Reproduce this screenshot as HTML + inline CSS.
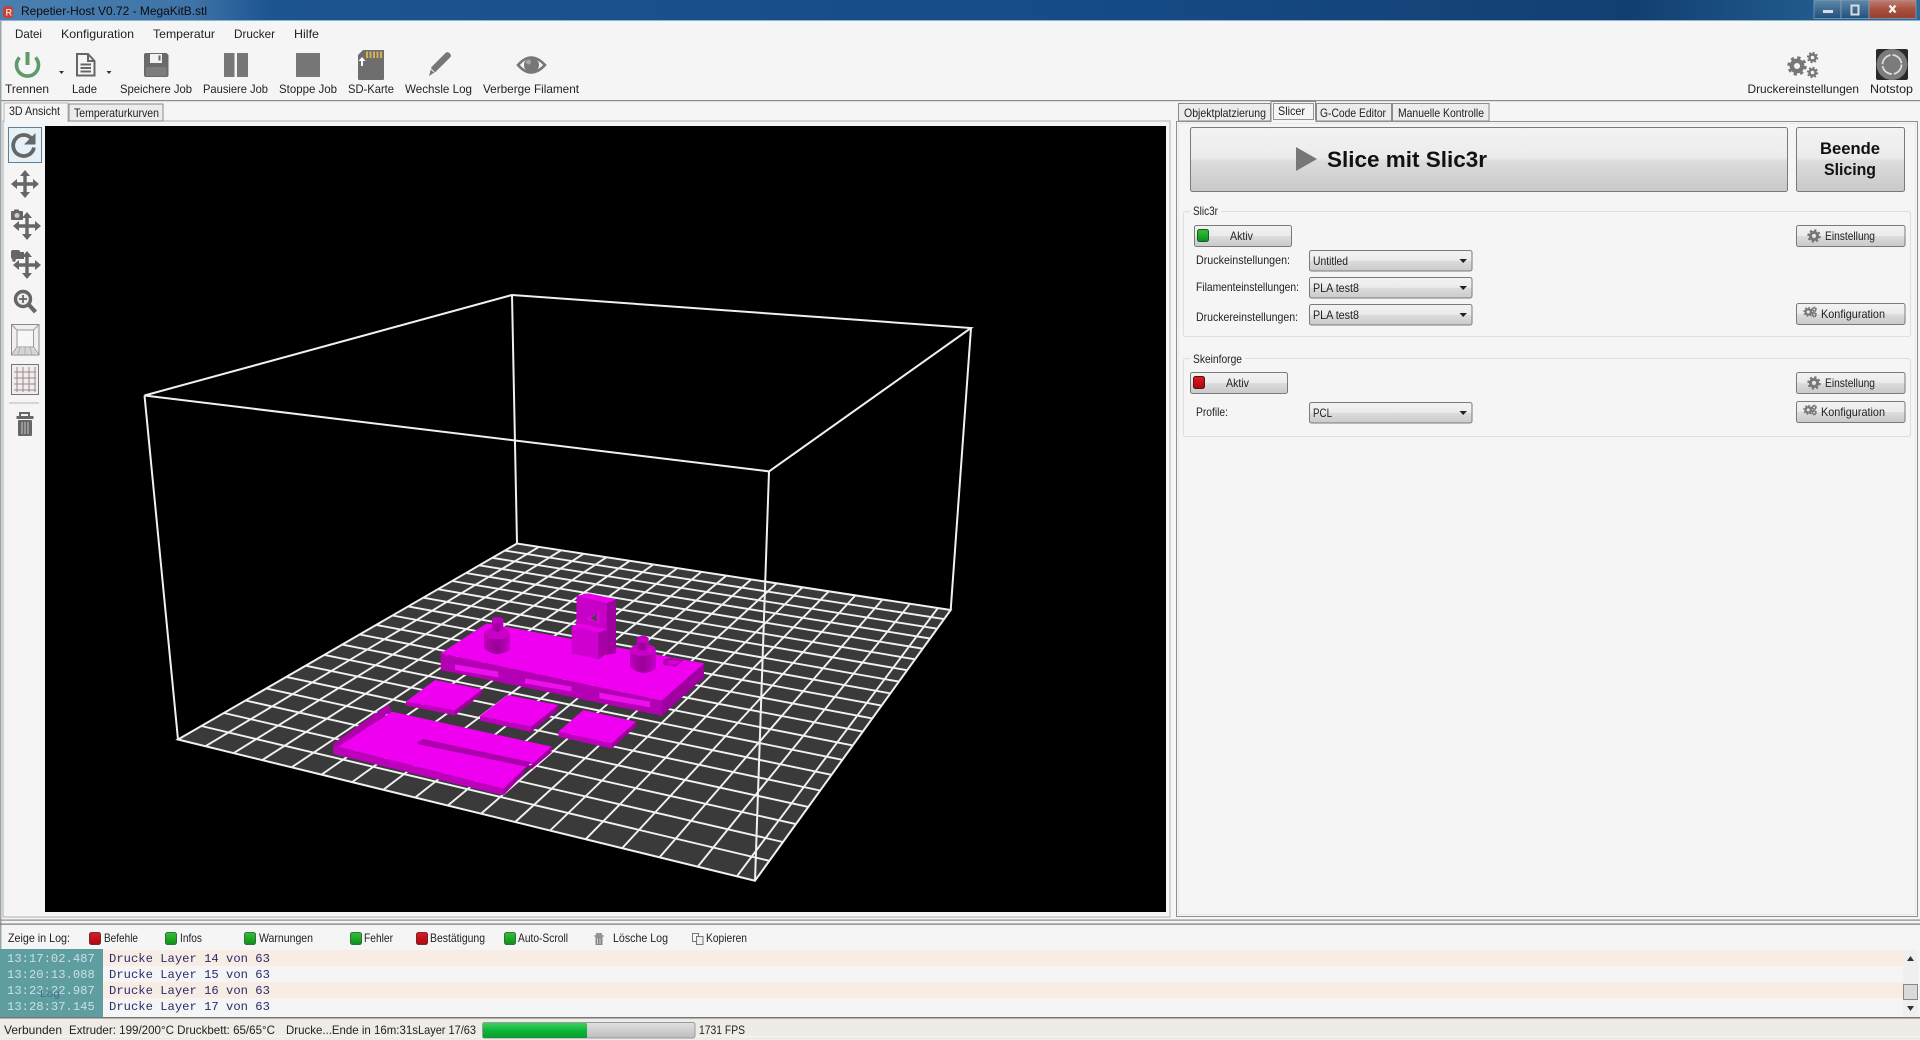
<!DOCTYPE html>
<html lang="de"><head><meta charset="utf-8"><title>Repetier-Host V0.72 - MegaKitB.stl</title>
<style>html,body{margin:0;padding:0;width:1920px;height:1040px;overflow:hidden;background:#f5f5f5}svg{display:block}text{font-family:"Liberation Sans",Arial,sans-serif;font-size:12px;fill:#222;white-space:pre}.m{font-family:"Liberation Mono",monospace;font-size:12.2px}</style></head><body>
<svg xmlns="http://www.w3.org/2000/svg" width="1920" height="1040" viewBox="0 0 1920 1040">
<defs>
<linearGradient id="title" x1="0" x2="1" y1="0" y2="0"><stop offset="0" stop-color="#4a7fb0"/><stop offset=".1" stop-color="#3f74a8"/><stop offset=".14" stop-color="#1d5590"/><stop offset=".6" stop-color="#164a84"/><stop offset=".85" stop-color="#123f72"/><stop offset="1" stop-color="#2a6a9c"/></linearGradient>
<linearGradient id="btn" x1="0" x2="0" y1="0" y2="1"><stop offset="0" stop-color="#f3f3f3"/><stop offset=".48" stop-color="#ebebeb"/><stop offset=".52" stop-color="#dcdcdc"/><stop offset="1" stop-color="#c9c9c9"/></linearGradient>
<linearGradient id="gled" x1="0" x2="0" y1="0" y2="1"><stop offset="0" stop-color="#35c035"/><stop offset="1" stop-color="#0c8f1c"/></linearGradient>
<linearGradient id="rled" x1="0" x2="0" y1="0" y2="1"><stop offset="0" stop-color="#e01a22"/><stop offset="1" stop-color="#a80a12"/></linearGradient>
<linearGradient id="prog" x1="0" x2="0" y1="0" y2="1"><stop offset="0" stop-color="#3fd060"/><stop offset=".5" stop-color="#0cb53a"/><stop offset="1" stop-color="#0a9c30"/></linearGradient>
<linearGradient id="track" x1="0" x2="0" y1="0" y2="1"><stop offset="0" stop-color="#e0e0e0"/><stop offset="1" stop-color="#bdbdbd"/></linearGradient>
<linearGradient id="close" x1="0" x2="0" y1="0" y2="1"><stop offset="0" stop-color="#c08074"/><stop offset=".5" stop-color="#a8503f"/><stop offset="1" stop-color="#983f30"/></linearGradient>
<linearGradient id="wb" x1="0" x2="0" y1="0" y2="1"><stop offset="0" stop-color="#5f88a8"/><stop offset="1" stop-color="#1f507c"/></linearGradient>
<linearGradient id="cyl" x1="0" x2="1" y1="0" y2="0"><stop offset="0" stop-color="#bc00b8"/><stop offset=".5" stop-color="#980098"/><stop offset="1" stop-color="#c400c4"/></linearGradient>
<g id="mv"><path d="M-10 0H10M0-10V10" stroke="#666" stroke-width="3.4" fill="none"/><path d="M0-14L-5-8H5ZM0 14L-5 8H5ZM-14 0L-8-5V5ZM14 0L8-5V5Z" fill="#666"/></g>
<g id="gear"><circle r="3.6" fill="none" stroke="#777" stroke-width="3"/><circle r="5.6" fill="none" stroke="#777" stroke-width="2.2" stroke-dasharray="2.2 2.2"/></g>
<g id="gears"><use href="#gear" transform="translate(6,7) scale(1.05)"/><use href="#gear" transform="translate(14.5,3.5) scale(.62)"/><use href="#gear" transform="translate(14.5,11) scale(.62)"/></g>
</defs>
<rect width="1920" height="1040" fill="#f5f5f5"/>
<!-- title bar -->
<rect width="1920" height="20" fill="url(#title)"/><rect y="20" width="1920" height="1" fill="#8fb4d2"/>
<rect x="3" y="6" width="10" height="12" rx="3" fill="#c8403a"/><text x="5.5" y="15.5" style="font-size:9px;font-weight:bold;fill:#f4d8d0">R</text>
<text x="21" y="15" textLength="186" style="fill:#0c0c0c">Repetier-Host V0.72 - MegaKitB.stl</text>
<rect x="1814" y="0" width="27" height="18.500" fill="url(#wb)" stroke="#8fa6b8" stroke-width=".7"/><rect x="1841" y="0" width="28" height="18.500" fill="url(#wb)" stroke="#8fa6b8" stroke-width=".7"/><rect x="1869" y="0" width="47" height="18.500" fill="url(#close)" stroke="#8fa6b8" stroke-width=".7"/>
<rect x="1823" y="10" width="10" height="3" fill="#d8dee4"/><rect x="1851.500" y="5.500" width="7" height="9" fill="none" stroke="#d8dee4" stroke-width="2"/>
<path d="M1889.500 5.500L1895.500 12.500M1895.500 5.500L1889.500 12.500" stroke="#f0f0f0" stroke-width="2.400"/>
<!-- menu -->
<text x="15" y="38" textLength="27">Datei</text><text x="61" y="38" textLength="73">Konfiguration</text><text x="153" y="38" textLength="62">Temperatur</text><text x="234" y="38" textLength="41">Drucker</text><text x="294" y="38" textLength="25">Hilfe</text>
<!-- toolbar icons -->
<path d="M19.5 57.500A11 11 0 1 0 35.500 57.500" fill="none" stroke="#5f9a6b" stroke-width="3.600"/><path d="M27.500 52V65" stroke="#5f9a6b" stroke-width="4"/>
<path d="M59 71H64L61.500 74Z" fill="#333"/>
<path d="M77 54H88L94.500 61V75.500H77ZM88 54V61H94.500M80.500 64.500H91M80.500 68H91M80.500 71.500H91" fill="none" stroke="#666" stroke-width="2"/>
<path d="M106.500 71H111.500L109 74Z" fill="#333"/>
<path d="M146 53H166.500L168.500 55V75Q168.500 77 166.500 77H146Q144 77 144 75V55Q144 53 146 53Z" fill="#6a6a6a"/><rect x="150" y="54" width="12" height="9" fill="#f2f2f2"/><rect x="158.500" y="55.500" width="2" height="5" fill="#666"/><rect x="146" y="67" width="20.500" height="9" fill="#7d7d7d"/>
<rect x="224" y="53" width="10.500" height="24" fill="#777"/><rect x="237" y="53" width="11" height="24" fill="#777"/>
<rect x="296" y="53" width="24" height="24" fill="#777"/>
<path d="M363 50H384V79Q384 80 383 80H359Q358 80 358 79V55Z" fill="#6e6e6e"/><path d="M367 51.500V58M370.500 51.500V58M374 51.500V58M377.500 51.500V58M381 51.500V58" stroke="#d4b050" stroke-width="2"/><path d="M362 57L365.500 61H363V66H361V61H358.500Z" fill="#fff"/>
<path d="M429 76L431.500 67L446 52.500Q448 51.500 450 53.500Q451.500 55.500 450.500 57L436 71.500Z" fill="#777"/><path d="M431 69L434 72" stroke="#f5f5f5"/>
<path d="M518 65Q531 50 545 65Q531 80 518 65Z" fill="none" stroke="#777" stroke-width="2.600"/><circle cx="531.500" cy="65" r="7.500" fill="#777"/><circle cx="528.500" cy="62" r="2.500" fill="#a5a5a5"/>
<use href="#gear" transform="translate(1797,66) scale(1.45)"/><use href="#gear" transform="translate(1812.500,57.500) scale(.85)"/><use href="#gear" transform="translate(1812.500,72.500) scale(.85)"/>
<rect x="1876" y="49" width="32" height="31" rx="2" fill="#2a2a2a"/><circle cx="1892" cy="64.500" r="15.500" fill="#7b7b7b"/><circle cx="1892" cy="64.500" r="9.500" fill="none" stroke="#ddd" stroke-width="1.800" stroke-dasharray="13 2"/>
<!-- toolbar labels -->
<g><text x="5" y="93" textLength="44">Trennen</text><text x="72" y="93" textLength="25">Lade</text><text x="120" y="93" textLength="72">Speichere Job</text><text x="203" y="93" textLength="65">Pausiere Job</text><text x="279" y="93" textLength="58">Stoppe Job</text><text x="348" y="93" textLength="46">SD-Karte</text><text x="405" y="93" textLength="67">Wechsle Log</text><text x="483" y="93" textLength="96">Verberge Filament</text><text x="1747.500" y="93" textLength="111.500">Druckereinstellungen</text><text x="1870" y="93" textLength="43">Notstop</text></g>
<rect y="100" width="1920" height="1.200" fill="#8a8a8a"/>
<!-- left pane -->
<rect x="0" y="21" width="1.500" height="1019" fill="#9aa5ad"/>
<rect x="3" y="121" width="1167" height="796" fill="#f5f5f5" stroke="#b0b0b0"/>
<path d="M4 122V103H68V122" fill="#f5f5f5" stroke="#b5b5b5"/><rect x="4.500" y="119" width="63" height="4" fill="#f5f5f5"/>
<rect x="69" y="104" width="94" height="17" fill="#ececec" stroke="#8a8a8a"/>
<text x="9" y="115" textLength="51">3D Ansicht</text><text x="74" y="117" textLength="85">Temperaturkurven</text>
<rect x="8.500" y="127.500" width="33" height="35" fill="#e6f1f7" stroke="#5f7f98"/>
<path d="M31.500 138.500A10.500 10.500 0 1 0 34 147.500" fill="none" stroke="#666" stroke-width="3.800"/><path d="M35.500 133V144.500H24Z" fill="#666"/>
<use href="#mv" transform="translate(25,184)"/>
<rect x="11" y="211" width="12" height="9" rx="1" fill="#666"/><rect x="14" y="209.500" width="5" height="2" fill="#666"/><circle cx="17" cy="215.500" r="2.500" fill="#ccc"/><use href="#mv" transform="translate(27,226)"/>
<rect x="11" y="250" width="9" height="9" rx="2" fill="#666"/><rect x="19" y="252" width="5" height="7" fill="#666"/><circle cx="14" cy="260" r="1.800" fill="#666"/><use href="#mv" transform="translate(27,265)"/>
<circle cx="23" cy="299" r="7.500" fill="#eee" stroke="#666" stroke-width="3.400"/><path d="M19 299H27M23 295V303" stroke="#666" stroke-width="1.800"/><path d="M29 305L35.500 312" stroke="#666" stroke-width="4.200"/>
<rect x="11.500" y="324.500" width="27.500" height="30.500" fill="#efefef" stroke="#8a8a8a"/><rect x="17" y="330" width="16.500" height="17" fill="#f7f7f7" stroke="#9a9a9a"/><path d="M11.500 324.500L17 330M39 324.500L33.500 330M11.500 355L17 347M39 355L33.500 347" stroke="#9a9a9a"/><path d="M17 349H33M15 351H35M14 353H36M20 347L18 355M25 347V355M30 347L32 355" stroke="#a8a8a8" stroke-width=".8"/>
<rect x="11.500" y="364.500" width="27" height="30" fill="#eee" stroke="#777"/><path d="M14 372H36M14 378H36M14 384H36M14 390H36M17 367V392M23 367V392M29 367V392M35 367V392" stroke="#a0868a" stroke-width="1"/>
<rect x="9" y="402.500" width="30" height="1" fill="#b8b8b8"/>
<path d="M20 416V413H29V416" fill="none" stroke="#666" stroke-width="2"/><rect x="16.500" y="416" width="17" height="3" fill="#666"/><rect x="18" y="420" width="14" height="16" rx="1" fill="#666"/><path d="M22 422V434M25 422V434M28 422V434" stroke="#c4c4c4"/>
<!-- 3D view -->
<rect x="45" y="126" width="1121" height="786" fill="#000"/>
<polygon points="178,739.500 755,880.700 950.700,610 517,543.500" fill="#3a3a3a"/>
<g id="grid" stroke="#f2f2f2" stroke-width="1.900" fill="none"></g>
<g fill="none" stroke="#f0f0f0" stroke-width="2"><path d="M178 739.500L755 880.700L950.700 610L517 543.500Z"/><path d="M517 543.500L512 295M950.700 610L971 328M178 739.500L144.500 395.500"/><path d="M512 295L971 328L769 471.400L144.500 395.500Z"/></g>
<g transform="translate(320,570) scale(.33333)">
<!-- base plate -->
<path d="M362 250L362 300L1025 437L1152 322L1152 280L1025 392Z" fill="#b400b4"/><path d="M1025 392L1152 280V322L1025 437Z" fill="#a000a0"/>
<path d="M362 250L500 160L1152 280L1025 392Z" fill="#f000f0"/>
<path d="M405 283L535 305V322L405 300ZM615 325L755 350V365L615 340ZM838 368L990 395V412L838 385Z" fill="#ec10ec"/>
<path d="M1030 268L1050 262L1090 270L1068 290L1030 285Z" fill="#b000b0"/><path d="M1045 270L1082 274L1066 284L1042 280Z" fill="#d800d8"/>
<!-- left cylinder -->
<path d="M492 195V235Q530 268 570 238V195Z" fill="url(#cyl)"/><ellipse cx="531" cy="190" rx="39" ry="18" fill="#c800c8"/><path d="M516 145V180Q533 192 550 180V145Z" fill="url(#cyl)"/><ellipse cx="532" cy="150" rx="17" ry="9" fill="#c000c0"/>
<!-- right cylinder -->
<path d="M930 245V290Q968 325 1008 295V245Z" fill="url(#cyl)"/><ellipse cx="969" cy="240" rx="39" ry="18" fill="#c800c8"/><path d="M950 205V235Q968 248 986 235V205Z" fill="url(#cyl)"/><ellipse cx="968" cy="208" rx="18" ry="11" fill="#c000c0"/>
<!-- tower -->
<path d="M770 78L805 70L888 88V250L860 255L768 220Z" fill="#cc00cc"/><path d="M770 78L805 70L888 88L860 100Z" fill="#e800e8"/><path d="M860 100L888 88V248L860 255Z" fill="#a000a0"/><path d="M770 78L860 100V240L770 220Z" fill="#c600c6"/>
<path d="M802 142L838 128V160L802 150Z" fill="#e000e0"/><path d="M812 145L830 132V155Z" fill="#444"/>
<path d="M755 168L780 160L862 178L835 188Z" fill="#e800e8"/><path d="M755 168L835 188V268L755 250Z" fill="#d000d0"/><path d="M835 188L862 178V250L835 268Z" fill="#a600a6"/>
<!-- squares -->
<path d="M258 395L405 420V436L258 407Z" fill="#bc00bc"/><path d="M405 420L487 358V370L405 436Z" fill="#a000a0"/><path d="M258 395L345 330L487 358L405 420Z" fill="#f000f0"/>
<path d="M480 438L633 470V486L480 452Z" fill="#bc00bc"/><path d="M633 470L715 405V420L633 486Z" fill="#a000a0"/><path d="M480 438L563 375L715 405L633 470Z" fill="#f000f0"/>
<path d="M715 485L875 520V536L715 500Z" fill="#bc00bc"/><path d="M875 520L948 455V470L875 536Z" fill="#a000a0"/><path d="M715 485L790 420L948 455L875 520Z" fill="#f000f0"/>
<!-- large plate -->
<path d="M40 520L205 403L215 422L60 532L55 552L40 550Z" fill="#b000ac"/>
<path d="M40 528V552L550 676V656L55 530Z" fill="#bc00bc"/><path d="M550 656L612 597V612L550 676Z" fill="#a000a0"/><path d="M635 583L695 530V547L635 597Z" fill="#a000a0"/><path d="M612 597L640 595V583L620 590Z" fill="#8a008a"/>
<path d="M55 530L215 425L695 530L635 583L320 515L300 522L620 590L612 597L550 656Z" fill="#f000f0"/>
<path d="M290 518L310 507L635 577L620 590L300 524Z" fill="#ac00ac"/>
</g>
<path d="M769 471.400L755 880.700" stroke="#f0f0f0" stroke-width="2"/>
<!-- right pane -->
<rect x="1176.500" y="121.500" width="741" height="795" fill="#f5f5f5" stroke="#8f8f8f"/><rect x="1178.500" y="123.500" width="737" height="791" fill="none" stroke="#e8e8e8"/>
<rect x="1178.500" y="103.500" width="92" height="17.500" fill="#ececec" stroke="#8a8a8a"/><rect x="1316.500" y="103.500" width="75" height="17.500" fill="#ececec" stroke="#8a8a8a"/><rect x="1392.500" y="103.500" width="96.500" height="17.500" fill="#ececec" stroke="#8a8a8a"/>
<path d="M1271 122V101.500H1315.500V122" fill="#f5f5f5" stroke="#8a8a8a"/><rect x="1271.500" y="120" width="44" height="3" fill="#f5f5f5"/>
<rect x="1273.500" y="103.500" width="40" height="16" fill="none" stroke="#333" stroke-dasharray="1 1"/>
<text x="1184" y="117" textLength="82">Objektplatzierung</text><text x="1278" y="115" textLength="27">Slicer</text><text x="1320" y="117" textLength="66">G-Code Editor</text><text x="1398" y="117" textLength="86">Manuelle Kontrolle</text>
<rect x="1190.500" y="127.500" width="597" height="64" rx="2" fill="url(#btn)" stroke="#7a7a7a"/><polygon points="1296,147 1317,159 1296,171" fill="#777"/>
<text x="1327" y="167" textLength="160" style="font-size:22.500px;font-weight:bold;fill:#111">Slice mit Slic3r</text>
<rect x="1796.500" y="127.500" width="108" height="64" rx="2" fill="url(#btn)" stroke="#7a7a7a"/>
<text x="1820" y="154" textLength="60" style="font-size:16.500px;font-weight:bold;fill:#111">Beende</text><text x="1824" y="175" textLength="52" style="font-size:16.500px;font-weight:bold;fill:#111">Slicing</text>
<!-- Slic3r group -->
<rect x="1183.500" y="211.500" width="727" height="125" rx="2" fill="none" stroke="#dedede"/><rect x="1190" y="205" width="31" height="12" fill="#f5f5f5"/><text x="1193" y="215" textLength="25">Slic3r</text>
<rect x="1194.500" y="225.500" width="97" height="21" rx="2" fill="url(#btn)" stroke="#7a7a7a"/><rect x="1197.500" y="229.500" width="11" height="12" rx="2" fill="url(#gled)" stroke="#155a25"/><text x="1230" y="240" textLength="23">Aktiv</text>
<rect x="1796.500" y="225.500" width="108.500" height="21" rx="2" fill="url(#btn)" stroke="#7a7a7a"/><use href="#gear" transform="translate(1814,236)"/><text x="1825" y="240" textLength="50">Einstellung</text>
<text x="1196" y="264" textLength="94">Druckeinstellungen:</text><text x="1196" y="291" textLength="103">Filamenteinstellungen:</text><text x="1196" y="321" textLength="102">Druckereinstellungen:</text>
<g><rect x="1309.500" y="250.500" width="162.500" height="20.500" rx="2" fill="url(#btn)" stroke="#7a7a7a"/><text x="1313" y="265" textLength="35">Untitled</text><path d="M1459.500 259H1467L1463.200 263Z" fill="#222"/></g>
<g><rect x="1309.500" y="277.500" width="162.500" height="20.500" rx="2" fill="url(#btn)" stroke="#7a7a7a"/><text x="1313" y="292" textLength="46">PLA test8</text><path d="M1459.500 286H1467L1463.200 290Z" fill="#222"/></g>
<g><rect x="1309.500" y="304.500" width="162.500" height="20.500" rx="2" fill="url(#btn)" stroke="#7a7a7a"/><text x="1313" y="319" textLength="46">PLA test8</text><path d="M1459.500 313H1467L1463.200 317Z" fill="#222"/></g>
<rect x="1796.500" y="303.500" width="108.500" height="21" rx="2" fill="url(#btn)" stroke="#7a7a7a"/><use href="#gears" transform="translate(1804,307) scale(.7)"/><text x="1821" y="318" textLength="64">Konfiguration</text>
<!-- Skeinforge group -->
<rect x="1183.500" y="358.500" width="727" height="78" rx="2" fill="none" stroke="#dedede"/><rect x="1190" y="352" width="55" height="12" fill="#f5f5f5"/><text x="1193" y="363" textLength="49">Skeinforge</text>
<rect x="1190.500" y="372.500" width="97" height="21" rx="2" fill="url(#btn)" stroke="#7a7a7a"/><rect x="1193.500" y="376.500" width="11" height="12" rx="2" fill="url(#rled)" stroke="#5a1015"/><text x="1226" y="387" textLength="23">Aktiv</text>
<rect x="1796.500" y="372.500" width="108.500" height="21" rx="2" fill="url(#btn)" stroke="#7a7a7a"/><use href="#gear" transform="translate(1814,383)"/><text x="1825" y="387" textLength="50">Einstellung</text>
<rect x="1796.500" y="401.500" width="108.500" height="21" rx="2" fill="url(#btn)" stroke="#7a7a7a"/><use href="#gears" transform="translate(1804,405) scale(.7)"/><text x="1821" y="416" textLength="64">Konfiguration</text>
<text x="1196" y="416" textLength="32">Profile:</text>
<rect x="1309.500" y="402.500" width="162.500" height="20.500" rx="2" fill="url(#btn)" stroke="#7a7a7a"/><text x="1313" y="417" textLength="19">PCL</text><path d="M1459.500 411H1467L1463.200 415Z" fill="#222"/>
<!-- splitter -->
<rect x="0" y="919.500" width="1920" height="1.200" fill="#8a8a8a"/><rect x="0" y="923.500" width="1920" height="1.200" fill="#777"/>
<!-- log toolbar -->
<text x="8" y="942" textLength="62">Zeige in Log:</text>
<g stroke-width=".8"><rect x="89.500" y="932.500" width="11" height="12" rx="2" fill="url(#rled)" stroke="#5a1015"/><rect x="165.500" y="932.500" width="11" height="12" rx="2" fill="url(#gled)" stroke="#155a25"/><rect x="244.500" y="932.500" width="11" height="12" rx="2" fill="url(#gled)" stroke="#155a25"/><rect x="350.500" y="932.500" width="11" height="12" rx="2" fill="url(#gled)" stroke="#155a25"/><rect x="416.500" y="932.500" width="11" height="12" rx="2" fill="url(#rled)" stroke="#5a1015"/><rect x="504.500" y="932.500" width="11" height="12" rx="2" fill="url(#gled)" stroke="#155a25"/></g>
<text x="104" y="942" textLength="34">Befehle</text><text x="180" y="942" textLength="22">Infos</text><text x="259" y="942" textLength="54">Warnungen</text><text x="364" y="942" textLength="29">Fehler</text><text x="430" y="942" textLength="55">Bestätigung</text><text x="518" y="942" textLength="50">Auto-Scroll</text>
<path d="M596 934H602M594.500 936H603.500" stroke="#777" stroke-width="1.400"/><rect x="595.500" y="937" width="7" height="8" fill="#888"/><path d="M597.500 938V944M600 938V944" stroke="#ddd" stroke-width=".8"/>
<text x="613" y="942" textLength="55">Lösche Log</text>
<rect x="692.500" y="933.500" width="6" height="8" fill="none" stroke="#777"/><rect x="696.500" y="936.500" width="6.500" height="8" fill="#f0f0f0" stroke="#777"/>
<text x="706" y="942" textLength="41">Kopieren</text>
<!-- log rows -->
<rect x="103" y="950" width="1800" height="16" fill="#f8ede4"/><rect x="103" y="982" width="1800" height="16" fill="#f8ede4"/>
<rect x="0" y="949" width="103" height="68" fill="#5f9ea0"/>
<g class="m"><text class="m" x="7" y="962" style="fill:#c9e0e0">13:17:02.487</text><text class="m" x="7" y="978" style="fill:#c9e0e0">13:20:13.088</text><text class="m" x="7" y="994" style="fill:#c9e0e0">13:23:22.987</text><text class="m" x="7" y="1010" style="fill:#c9e0e0">13:28:37.145</text>
<text class="m" x="109" y="962" style="fill:#2d2a6c">Drucke Layer 14 von 63</text><text class="m" x="109" y="978" style="fill:#2d2a6c">Drucke Layer 15 von 63</text><text class="m" x="109" y="994" style="fill:#2d2a6c">Drucke Layer 16 von 63</text><text class="m" x="109" y="1010" style="fill:#2d2a6c">Drucke Layer 17 von 63</text></g>
<text x="40" y="997" textLength="20" style="font-size:10px;fill:#46708a">Log</text>
<!-- scrollbar -->
<rect x="1903" y="950" width="15" height="67" fill="#efefef"/><path d="M1907 961H1914L1910.500 956Z" fill="#333"/><path d="M1907 1006H1914L1910.500 1011Z" fill="#333"/><rect x="1903.500" y="984.500" width="14" height="15" fill="#dadada" stroke="#888"/>
<!-- status bar -->
<rect x="0" y="1017" width="1920" height="1.500" fill="#777"/><rect x="0" y="1018.500" width="1920" height="21.500" fill="#efece8"/><rect x="0" y="1036" width="1920" height="1" fill="#f8f6f3"/>
<text x="4" y="1034" textLength="58">Verbunden</text><text x="69" y="1034" textLength="206">Extruder: 199/200°C Druckbett: 65/65°C</text><text x="286" y="1034" textLength="132">Drucke...Ende in 16m:31s</text><text x="418" y="1034" textLength="58">Layer 17/63</text>
<rect x="482.500" y="1022.500" width="212.500" height="15.500" rx="2" fill="url(#track)" stroke="#9a9a9a"/><rect x="483" y="1023" width="104" height="15" rx="1" fill="url(#prog)"/>
<text x="699" y="1034" textLength="46">1731 FPS</text>
<script>
(function(){var a=444.6,b=550.7,c=178,d=-13.3,e=26.6,f=739.5,g=-0.17534,h=0.40953,G=document.getElementById('grid'),s='';
function P(u,v){var w=g*u+h*v+1;return ((a*u+b*v+c)/w).toFixed(1)+','+((d*u+e*v+f)/w).toFixed(1)}
for(var i=1;i<=17;i++){var u=i/17.45;var p=P(u,0),q=P(u,1);s+='M'+p+'L'+q}
for(var j=1;j<20;j++){var v=j/20;s+='M'+P(0,v)+'L'+P(1,v)}
var n=document.createElementNS('http://www.w3.org/2000/svg','path');n.setAttribute('d',s);G.appendChild(n);
document.querySelectorAll('text[textLength]').forEach(function(t){t.setAttribute('lengthAdjust','spacingAndGlyphs')})})();
</script>
</svg>
</body></html>
